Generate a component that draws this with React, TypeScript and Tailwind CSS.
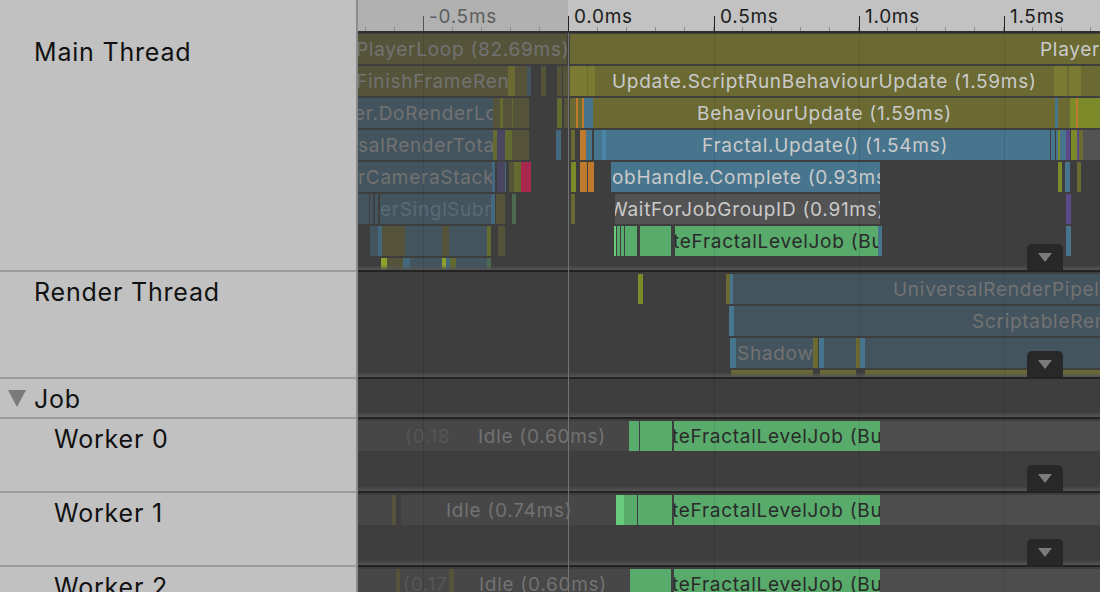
const olive = 'bg-[#6b6a33]'
const oliveHi = 'bg-[#7b7a33]'
const oliveDim = 'bg-[#55543a]'
const lime = 'bg-[#7c8a2a]'
const limeHi = 'bg-[#8ca12c]'
const limeDim = 'bg-[#636b30]'
const blue = 'bg-[#47758e]'
const blueHi = 'bg-[#4a86a8]'
const blueDim = 'bg-[#43545f]'
const blueMid = 'bg-[#44697f]'
const green = 'bg-[#58ab6b]'
const greenHi = 'bg-[#66cc7c]'
const greenDim = 'bg-[#4b6a50]'
const grey = 'bg-[#535353]'
const idle = 'bg-[#474747]'
const orange = 'bg-[#c07a2e]'
const crimson = 'bg-[#a8284e]'
const purple = 'bg-[#5b4a8a]'
const purpleDim = 'bg-[#4a4660]'

const LIGHT = 'text-[#cacaca]'
const DIM = 'text-[#727272]'
const FAINT = 'text-[#565656]'
const FAINT_BLUE = 'text-[#5b6a74]'
const DARK = 'text-[#2a2a2a]'

// all x values are page pixels, it's easier to read them off the capture
type Bar = { x: number; to: number; c: string; label?: string; at?: number; text?: string }

const b = (x: number, to: number, c: string, label?: string, at?: number, text?: string): Bar => ({ x, to, c, label, at, text })

const mainLanes: Bar[][] = [
  [
    b(358, 567, oliveDim, 'PlayerLoop (82.69ms)', 356, DIM),
    b(570, 1100, olive, 'Player', 1040, LIGHT),
  ],
  [
    b(358, 508, oliveDim, 'FinishFrameRen', 356, DIM),
    b(508, 515, olive),
    b(515, 527, oliveDim),
    b(527, 531, blueDim),
    b(541, 546, oliveDim),
    b(557, 562, oliveDim),
    b(563, 570, oliveDim),
    b(570, 587, oliveHi),
    b(587, 588, olive),
    b(588, 595, oliveHi),
    b(595, 1100, olive, 'Update.ScriptRunBehaviourUpdate (1.59ms)', 612, LIGHT),
    b(1054, 1067, oliveHi),
    b(1069, 1081, oliveHi),
  ],
  [
    b(358, 493, blueDim, 'er.DoRenderLo', 354, DIM),
    b(493, 500, oliveDim),
    b(500, 503, limeDim),
    b(503, 512, oliveDim),
    b(512, 513, limeDim),
    b(513, 529, oliveDim),
    b(557, 562, limeDim),
    b(564, 568, oliveDim),
    b(570, 576, olive),
    b(576, 578, orange),
    b(578, 582, olive),
    b(582, 584, orange),
    b(584, 593, blue),
    b(593, 1055, olive, 'BehaviourUpdate (1.59ms)', 697, LIGHT),
    b(1055, 1058, blue),
    b(1058, 1070, olive),
    b(1070, 1076, lime),
    b(1076, 1078, orange),
    b(1078, 1100, lime),
  ],
  [
    b(358, 493, blueDim, 'salRenderTota', 358, DIM),
    b(493, 497, limeDim),
    b(497, 505, purpleDim),
    b(505, 512, limeDim),
    b(512, 529, oliveDim),
    b(556, 561, blueMid),
    b(571, 575, olive),
    b(580, 586, orange),
    b(586, 592, blue),
    b(594, 1050, blue, 'Fractal.Update() (1.54ms)', 702, LIGHT),
    b(602, 606, blueHi),
    b(1051, 1055, blue),
    b(1056, 1058, blue),
    b(1058, 1060, lime),
    b(1060, 1066, blue),
    b(1066, 1070, purple),
    b(1071, 1077, lime),
    b(1077, 1079, purple),
    b(1079, 1083, olive),
    b(1083, 1100, grey),
  ],
  [
    b(358, 492, blueDim, 'rCameraStack', 358, DIM),
    b(492, 495, blueMid),
    b(497, 505, purpleDim),
    b(505, 506, blueMid),
    b(509, 514, oliveDim),
    b(514, 521, limeDim),
    b(521, 531, crimson),
    b(571, 576, lime),
    b(580, 587, orange),
    b(588, 594, orange),
    b(611, 880, blue, 'obHandle.Complete (0.93ms)', 612, LIGHT),
    b(1058, 1062, lime),
    b(1065, 1070, blue),
    b(1077, 1081, olive),
  ],
  [
    b(358, 369, blueDim),
    b(370, 373, blueDim),
    b(375, 378, blueDim),
    b(380, 447, blueDim, 'erSingl', 380, FAINT_BLUE),
    b(447, 491, blueDim, 'Subm', 447, FAINT_BLUE),
    b(491, 495, blueMid),
    b(496, 505, oliveDim),
    b(512, 516, greenDim),
    b(571, 575, olive),
    b(615, 880, grey, 'WaitForJobGroupID (0.91ms)', 609, LIGHT),
    b(1066, 1071, purple),
  ],
  [
    b(370, 378, blueDim),
    b(378, 382, blueMid),
    b(382, 405, oliveDim),
    b(405, 442, blueDim),
    b(442, 449, oliveDim),
    b(449, 487, blueDim),
    b(487, 491, limeDim),
    b(498, 505, oliveDim),
    b(614, 616, greenHi),
    b(617, 620, green),
    b(621, 624, green),
    b(625, 637, green),
    b(640, 671, green),
    b(675, 880, green, 'teFractalLevelJob (Bu', 673, DARK),
    b(878, 882, blue),
    b(1066, 1071, blue),
  ],
  [
    b(381, 387, limeHi),
    b(387, 403, oliveDim),
    b(403, 410, blueMid),
    b(410, 442, blueDim),
    b(442, 446, limeHi),
    b(446, 450, blueMid),
    b(450, 456, limeDim),
    b(456, 487, blueDim),
    b(487, 491, greenDim),
  ],
]

const renderLanes: Bar[][] = [
  [
    b(638, 643, lime),
    b(726, 730, olive),
    b(730, 733, blue),
    b(733, 1100, blueDim, 'UniversalRenderPipelin', 893, DIM),
  ],
  [
    b(729, 734, blue),
    b(734, 1100, blueDim, 'ScriptableRen', 972, DIM),
  ],
  [
    b(730, 736, blue),
    b(736, 813, blueDim, 'Shadow', 737, DIM),
    b(813, 818, olive),
    b(819, 824, blue),
    b(824, 856, blueDim),
    b(856, 860, olive),
    b(860, 865, blue),
    b(865, 1100, blueDim),
  ],
  [
    b(731, 813, olive),
    b(820, 856, olive),
    b(865, 1100, olive),
  ],
]

const worker0: Bar[] = [
  b(358, 629, idle),
  b(405, 460, idle, '(0.18', 405, FAINT),
  b(478, 629, idle, 'Idle (0.60ms)', 478, DIM),
  b(629, 639, green),
  b(640, 672, green),
  b(674, 880, green, 'teFractalLevelJob (Bu', 672, DARK),
  b(880, 1100, 'bg-[#4d4d4d]'),
]

const worker1: Bar[] = [
  b(358, 392, idle),
  b(392, 396, oliveDim),
  b(401, 616, idle, 'Idle (0.74ms)', 446, DIM),
  b(616, 624, greenHi),
  b(624, 637, green),
  b(638, 672, green),
  b(674, 880, green, 'teFractalLevelJob (Bu', 672, DARK),
  b(880, 1100, 'bg-[#4d4d4d]'),
]

const worker2: Bar[] = [
  b(358, 396, idle),
  b(396, 400, oliveDim),
  b(400, 449, idle, '(0.17', 403, FAINT),
  b(449, 454, oliveDim),
  b(454, 630, idle, 'Idle (0.60ms)', 479, DIM),
  b(630, 671, green),
  b(674, 880, green, 'teFractalLevelJob (Bu', 672, DARK),
  b(880, 1100, 'bg-[#4d4d4d]'),
]

const majors = [
  { x: 423, label: '-0.5ms', dim: true },
  { x: 568, label: '0.0ms', dim: false },
  { x: 714, label: '0.5ms', dim: false },
  { x: 859, label: '1.0ms', dim: false },
  { x: 1004, label: '1.5ms', dim: false },
]

const minors = Array.from({ length: 26 }, (_, i) => 365 + i * 29)

function Lane({ bars, height = 'h-[32.1px]' }: { bars: Bar[]; height?: string }) {
  return (
    <div className={`relative shrink-0 ${height}`}>
      {bars.map((bar, i) => (
        <div
          key={i}
          className={`absolute top-0 bottom-[2px] overflow-hidden whitespace-nowrap text-[19px] leading-[32px] tracking-[0.72px] ${bar.c} ${bar.text ?? ''}`}
          style={{ left: bar.x - 358, width: bar.to - bar.x, textIndent: bar.at != null ? bar.at - bar.x : 0 }}
        >
          {bar.label}
        </div>
      ))}
    </div>
  )
}

function Expander() {
  return (
    <div className="absolute right-[37px] bottom-0 w-[36px] h-[26px] bg-[#282828] rounded-t-[5px] flex items-center justify-center">
      <svg width="14" height="9" viewBox="0 0 14 9">
        <polygon points="0,0 14,0 7,9" fill="#7b7b7b" />
      </svg>
    </div>
  )
}

function Track({ height, children, expander = true }: { height: string; children: React.ReactNode; expander?: boolean }) {
  return (
    <div className={`relative shrink-0 overflow-hidden border-b-2 border-[#232323] ${height}`}>
      {children}
      <div className="absolute left-0 right-0 bottom-0 h-[5px] bg-gradient-to-b from-transparent to-[#555555]" />
      {expander && <Expander />}
    </div>
  )
}

function Ruler() {
  return (
    <div className="relative h-[33px] shrink-0 bg-[#c2c2c2] border-b-2 border-[#2e2e2e]">
      <div className="absolute left-0 top-0 bottom-0 w-[210px] bg-[#b1b1b1]" />
      {minors.map(x => (
        <div key={x} className="absolute bottom-0 w-px h-[4px] bg-[#8d8d8d]" style={{ left: x - 358 }} />
      ))}
      {majors.map(m => (
        <div
          key={m.x}
          className={`absolute bottom-0 w-px h-[15px] ${m.dim ? 'bg-[#555555]' : 'bg-[#222222]'}`}
          style={{ left: m.x - 358 }}
        />
      ))}
      {majors.map(m => (
        <span
          key={m.label}
          className={`absolute top-[5px] text-[19px] leading-[24px] tracking-[0.72px] ${m.dim ? 'text-[#5e5e5e]' : 'text-[#1c1c1c]'}`}
          style={{ left: m.x - 358 + 6 }}
        >
          {m.label}
        </span>
      ))}
    </div>
  )
}

function SideRow({ label, height, indent = 'pl-[34px]', pad = 'pt-[8px]', caret = false }: { label: string; height: string; indent?: string; pad?: string; caret?: boolean }) {
  return (
    <div className={`relative shrink-0 border-b-2 border-[#9c9c9c] text-[25px] leading-[24px] tracking-[0.8px] text-[#111111] ${height} ${indent} ${pad}`}>
      {caret && (
        <svg className="absolute left-[8px] top-[11px]" width="18" height="17" viewBox="0 0 18 17">
          <polygon points="0,0 18,0 9,17" fill="#7a7a7a" />
        </svg>
      )}
      {label}
    </div>
  )
}

export default function App() {
  return (
    <div className="flex w-[1100px] h-[592px] overflow-hidden bg-[#3e3e3e] font-['Inter',sans-serif]">
      <div className="w-[358px] shrink-0 bg-[#c1c1c1] border-r-2 border-[#8b8b8b] flex flex-col">
        <SideRow label="Main Thread" height="h-[272px]" pad="pt-[40px]" />
        <SideRow label="Render Thread" height="h-[107px]" />
        <SideRow label="Job" height="h-[40px]" caret />
        <SideRow label="Worker 0" height="h-[74px]" indent="pl-[54px]" />
        <SideRow label="Worker 1" height="h-[74px]" indent="pl-[54px]" />
        <SideRow label="Worker 2" height="h-[74px]" indent="pl-[54px]" />
      </div>

      <div className="relative flex-1 flex flex-col overflow-hidden">
        <Ruler />
        <Track height="h-[239px]">
          <div className="h-[0.6px]" />
          {mainLanes.map((bars, i) => <Lane key={i} bars={bars} />)}
        </Track>
        <Track height="h-[107px]">
          <div className="h-[2px]" />
          {renderLanes.map((bars, i) => <Lane key={i} bars={bars} />)}
        </Track>
        <Track height="h-[40px]" expander={false}>
          <div />
        </Track>
        <Track height="h-[74px]">
          <div className="h-[2px]" />
          <Lane bars={worker0} />
        </Track>
        <Track height="h-[74px]">
          <div className="h-[2px]" />
          <Lane bars={worker1} />
        </Track>
        <Track height="h-[74px]" expander={false}>
          <div className="h-[2px]" />
          <Lane bars={worker2} />
        </Track>

        {/* time grid sits on top of the bars */}
        {majors.map(m => (
          <div
            key={m.x}
            className={`absolute top-[33px] bottom-0 w-px ${m.x === 568 ? 'bg-[#737373]' : 'bg-black/10'}`}
            style={{ left: m.x - 358 }}
          />
        ))}
      </div>
    </div>
  )
}
